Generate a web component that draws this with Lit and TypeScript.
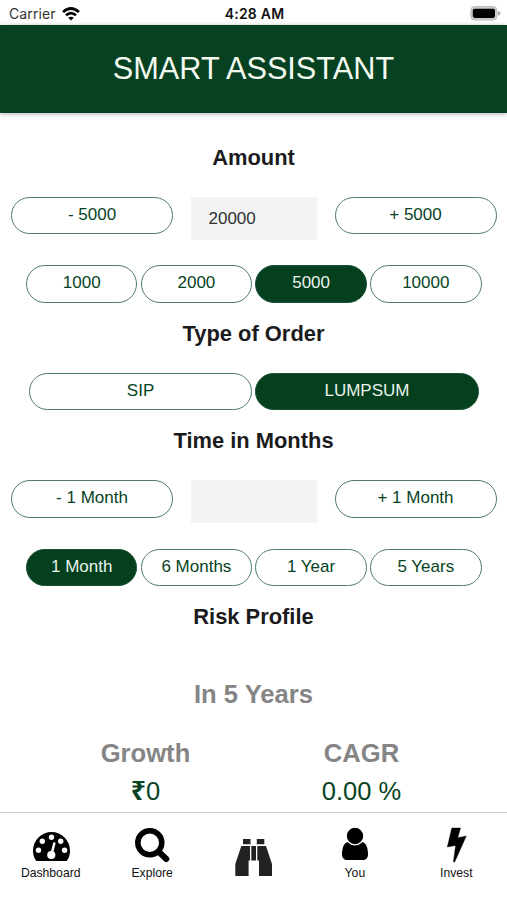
import { LitElement, html, css, svg } from "lit";
import { customElement, property } from "lit/decorators.js";
import { classMap } from "lit/directives/class-map.js";

@customElement("pill-button")
class PillButton extends LitElement {
  @property() label = "";
  @property({ type: Boolean }) selected = false;

  static styles = css`
    :host { display: block; }
    .pill {
      display: block;
      width: 100%;
      height: 37.500px;
      box-sizing: border-box;
      margin: 0;
      padding: 0 0 3px;
      border: 1px solid #4f7c66;
      border-radius: 19px;
      background: #fff;
      color: #064324;
      font: 17px/33px "Liberation Sans", Arial, sans-serif;
      text-align: center;
      white-space: nowrap;
    }
    .selected { background: #043f1e; border-color: #1b5135; color: #e9f3ec; }
  `;

  render() {
    return html`<button class=${classMap({ pill: true, selected: this.selected })}>${this.label}</button>`;
  }
}

const icons: Record<string, unknown> = {
  Dashboard: svg`
    <path d="M3 29.500 C.4 26 0 22.500 0 19.500 A18.500 18.500 0 0 1 37 19.500 C37 23 36.300 26.500 34 29.500 Q33.500 30 32.500 30 H4.500 Q3.500 30 3 29.500 Z" />
    <g fill="#fff"><circle cx="18.500" cy="6.300" r="2.700" /><circle cx="9.300" cy="10.300" r="2.700" />
    <circle cx="27.700" cy="10.300" r="2.700" /><circle cx="5.500" cy="19.300" r="2.700" />
    <circle cx="31.600" cy="19.300" r="2.700" /><circle cx="18.300" cy="24" r="4.100" /></g>
    <path d="M18.600 23 L21.300 12.500" fill="none" stroke="#fff" stroke-width="2.500" stroke-linecap="round" />`,
  Explore: svg`
    <circle cx="14.800" cy="14.800" r="12" fill="none" stroke="#000" stroke-width="5.500" />
    <path d="M24.500 24.500 L31.300 31" fill="none" stroke="#000" stroke-width="6" stroke-linecap="round" />`,
  Find: svg`
    <g fill="#222"><path d="M8 0 H15.500 V5.200 H8 Z M21.800 0 H29.300 V5.200 H21.800 Z M16.300 7 H21 V21.500 H16.300 Z" />
    <path d="M6.300 7 H15 V21.500 H13.600 V37 H.3 V25 Z M22.300 7 H31 L37 25 V37 H24 V21.500 H22.300 Z" /></g>`,
  You: svg`
    <path d="M6 14 C1.800 14.500 0 20 0 26.500 C0 30 2 32 5.500 32 H20.500 C24 32 26 30 26 26.500 C26 20 24.200 14.500 20 14 Z" />
    <circle cx="13" cy="8" r="8.800" stroke="#fff" stroke-width="1.200" />`,
  Invest: svg`
    <path d="M4.800 0 H13.500 L10.800 9.800 L19.300 8 L7.800 33.800 Q7.200 34.500 6.400 33.800 L8.600 17.500 L.3 19 Z" stroke="#000" stroke-width=".4" stroke-linejoin="round" />`,
};

@customElement("app-root")
class AppRoot extends LitElement {
  static styles = css`
    :host {
      display: flex;
      flex-direction: column;
      width: 507px;
      height: 900px;
      overflow: hidden;
      background: #fff;
      color: #1b1b1d;
      font-family: "Liberation Sans", Arial, sans-serif;
    }
    .status {
      flex: none;
      display: grid;
      grid-template-columns: 1fr auto 1fr;
      align-items: center;
      height: 25px;
      box-sizing: border-box;
      padding: 2px 6px 0 9px;
      font: 14px/20px Inter, sans-serif;
    }
    .carrier { display: flex; align-items: center; gap: 6px; color: #333; letter-spacing: .1px; }
    .time { font-weight: 600; color: #111; letter-spacing: .2px; margin-right: 1px; }
    .battery { justify-self: end; }
    svg { display: block; flex: none; }
    .header {
      flex: none;
      height: 87.500px;
      box-sizing: border-box;
      padding-top: 1px;
      background: #064121;
      color: #f4faf0;
      text-align: center;
      font-size: 30.700px;
      line-height: 85px;
      box-shadow: 0 1px 5px rgba(0, 0, 0, .3);
    }
    .content { flex: 1; min-height: 0; overflow: hidden; padding-top: 31px; text-align: center; }
    .title { margin: 0; font-size: 21.900px; line-height: 28px; font-weight: 700; }
    .stepper { display: grid; grid-template-columns: 162px 126.500px 162px; gap: 17.500px; margin: 25px 10.500px 25.500px 11px; }
    .field { height: 43px; box-sizing: border-box; padding-left: 18px; background: #f3f3f3; text-align: left; font-size: 17px; line-height: 43px; color: #303030; }
    .choices { display: grid; grid-template-columns: repeat(4, 1fr); gap: 3.300px; margin: 0 25.500px 17px 26px; }
    .orders { display: grid; grid-template-columns: 1fr 1fr; gap: 3.300px; margin: 25px 28.500px 17px 29px; }
    .horizon { margin: 45.500px 0 0; font-size: 25.600px; line-height: 34px; font-weight: 700; color: #858585; }
    .results { display: grid; grid-template-columns: 216px 216px; justify-content: center; margin-top: 25.500px; }
    .label { font-size: 25.600px; line-height: 34px; font-weight: 700; color: #858585; }
    .value { font-size: 25.500px; line-height: 34px; padding-top: 4px; color: #064324; }
    .rupee { font: 700 26.500px/1 "Noto Sans", sans-serif; }
    .tabs {
      flex: none;
      display: grid;
      grid-template-columns: repeat(5, 1fr);
      height: 88px;
      box-sizing: border-box;
      border-top: 1px solid #ccc;
      background: #fff;
    }
    .tab { display: flex; flex-direction: column; align-items: center; font-size: 12.200px; line-height: 16px; color: #111; }
    .icon { display: flex; align-items: flex-start; }
    .glyph { overflow: visible; }
  `;

  private pill(label: string, selected = false) {
    return html`<pill-button label=${label} ?selected=${selected}></pill-button>`;
  }

  private tab(name: string, w: number, h: number, top: number, label = name) {
    return html`<div class="tab">
      <div class="icon" style="padding-top:${top}px;height:${52 - top}px">
        <svg class="glyph" width=${w} height=${h} viewBox="0 0 ${w} ${h}">${icons[name]}</svg>
      </div>
      <span>${label}</span>
    </div>`;
  }

  render() {
    return html`
      <div class="status">
        <div class="carrier">
          <span>Carrier</span>
          <svg width="18" height="14" viewBox="0 0 18 14" fill="none" stroke="#000" stroke-width="2.700">
            <path d="M1 5 Q9 -2 17 5" /><path d="M4 8.300 Q9 4 14 8.300" />
            <path d="M9 13.500 L6.200 10.700 Q9 8.600 11.800 10.700 Z" fill="#000" stroke="none" />
          </svg>
        </div>
        <div class="time">4:28 AM</div>
        <svg class="battery" width="31" height="15" viewBox="0 0 31 15">
          <rect x=".8" y=".6" width="26.200" height="13.400" rx="3.800" fill="#ccc" stroke="#bbb" />
          <rect x="2.800" y="2.700" width="22.200" height="9.200" rx="1.800" />
          <path d="M28 5 Q30.500 5.500 30.500 7.300 Q30.500 9.200 28 9.700 Z" fill="#aaa" />
        </svg>
      </div>
      <div class="header">SMART ASSISTANT</div>
      <div class="content">
        <h2 class="title">Amount</h2>
        <div class="stepper">${this.pill("- 5000")}<div class="field">20000</div>${this.pill("+ 5000")}</div>
        <div class="choices">
          ${this.pill("1000")}${this.pill("2000")}${this.pill("5000", true)}${this.pill("10000")}
        </div>
        <h2 class="title">Type of Order</h2>
        <div class="orders">${this.pill("SIP")}${this.pill("LUMPSUM", true)}</div>
        <h2 class="title">Time in Months</h2>
        <div class="stepper">${this.pill("- 1 Month")}<div class="field"></div>${this.pill("+ 1 Month")}</div>
        <div class="choices">
          ${this.pill("1 Month", true)}${this.pill("6 Months")}${this.pill("1 Year")}${this.pill("5 Years")}
        </div>
        <h2 class="title">Risk Profile</h2>
        <div class="horizon">In 5 Years</div>
        <div class="results">
          <div><div class="label">Growth</div><div class="value"><span class="rupee">₹</span>0</div></div>
          <div><div class="label">CAGR</div><div class="value">0.00 %</div></div>
        </div>
      </div>
      <div class="tabs">
        ${this.tab("Dashboard", 36, 30, 18)}
        ${this.tab("Explore", 34, 34, 15)}
        ${this.tab("Find", 37, 37, 26, "")}
        ${this.tab("You", 26, 32, 15)}
        ${this.tab("Invest", 19, 34, 15)}
      </div>
    `;
  }
}
